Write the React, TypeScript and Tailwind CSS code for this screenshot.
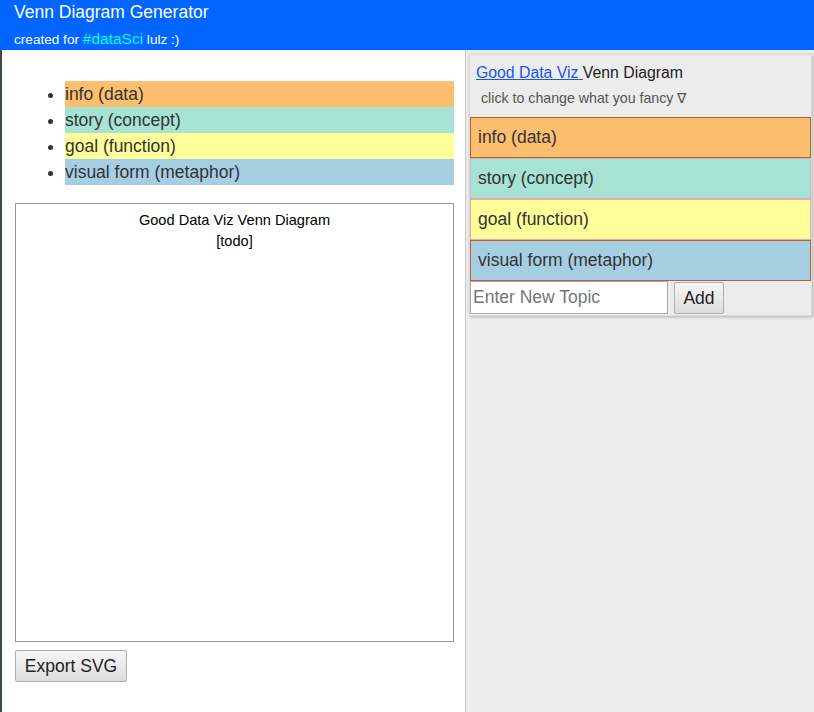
import React from "react";

const topics = [
  { label: "info (data)", bg: "bg-[#fdbf6f]", border: "border-[#b8612e]" },
  { label: "story (concept)", bg: "bg-[#a6e3d4]", border: "border-[#d6b0c0]" },
  { label: "goal (function)", bg: "bg-[#ffff99]", border: "border-[#f4a3a3]" },
  { label: "visual form (metaphor)", bg: "bg-[#a6cee3]", border: "border-[#b8612e]" },
];

function Header() {
  return (
    <div className="h-[50px] bg-[#0066ff] px-[14px] pt-[2px] text-white">
      <div className="text-[17.5px] leading-[21px]">Venn Diagram Generator</div>
      <div className="mt-[7px] text-[13.6px] leading-[18px]">
        created for <span className="text-[15.5px] text-[#00ffff]">#dataSci</span> lulz :)
      </div>
    </div>
  );
}

function LeftSide() {
  return (
    <div className="flex w-[464px] flex-col border-r border-[#c8c8c8] bg-white">
      <ul className="mt-[31px] ml-[48px] mr-[11px] list-disc pl-[15px] text-[17.5px] text-[#333]">
        {topics.map((t) => (
          <li key={t.label} className={`${t.bg} h-[26px] leading-[26px]`}>
            {t.label}
          </li>
        ))}
      </ul>
      <div className="mx-[13px] mt-[18px] h-[439px] w-[439px] border border-[#999] bg-white pt-[6px] text-center text-[14.6px] leading-[21px] text-black">
        <div>Good Data Viz Venn Diagram</div>
        <div>[todo]</div>
      </div>
      <div className="mx-[13px] mt-[8px]">
        <button className="h-[32px] w-[112px] rounded-[2px] border border-[#adadad] bg-gradient-to-b from-[#f6f6f6] to-[#dddddd] text-[17.5px] text-[#222]">
          Export SVG
        </button>
      </div>
    </div>
  );
}

function RightSide() {
  return (
    <div className="flex-1 bg-[#ececec] pt-[4px] pl-[3px] pr-[2px]">
      <div className="border border-[#dcdcdc] bg-[#ececec] shadow-[1px_1px_3px_rgba(0,0,0,0.25)]">
        <div className="px-[6px] pt-[8px] pb-[11px]">
          <div className="text-[15.8px] leading-[20px] text-[#222]">
            <a href="#" className="text-[#1a55ee] underline">
              Good Data Viz{" "}
            </a>
            Venn Diagram
          </div>
          <div className="mt-[7px] pl-[5px] text-[14.2px] leading-[16px] text-[#555]">
            click to change what you fancy ∇
          </div>
        </div>
        {topics.map((t) => (
          <div
            key={t.label}
            className={`${t.bg} ${t.border} h-[41px] border px-[7px] text-[17.5px] leading-[39px] text-[#333]`}
          >
            {t.label}
          </div>
        ))}
        <div className="flex h-[34px] items-start gap-[6px]">
          <input
            placeholder="Enter New Topic"
            className="h-[33px] w-[198px] border border-[#aaa] bg-white px-[2px] text-[17.5px] text-[#333] placeholder:text-[#757575] outline-none"
          />
          <button className="mt-[1px] h-[32px] w-[50px] rounded-[2px] border border-[#adadad] bg-gradient-to-b from-[#f6f6f6] to-[#dddddd] text-[17.5px] text-[#222]">
            Add
          </button>
        </div>
      </div>
    </div>
  );
}

export default function App() {
  return (
    <div className="flex h-[712px] w-[814px] flex-col overflow-hidden bg-white font-['Liberation_Sans',Arial,sans-serif]">
      <Header />
      <div className="flex flex-1">
        <div className="w-[2px] bg-[#3a4a44]" />
        <LeftSide />
        <RightSide />
      </div>
    </div>
  );
}
